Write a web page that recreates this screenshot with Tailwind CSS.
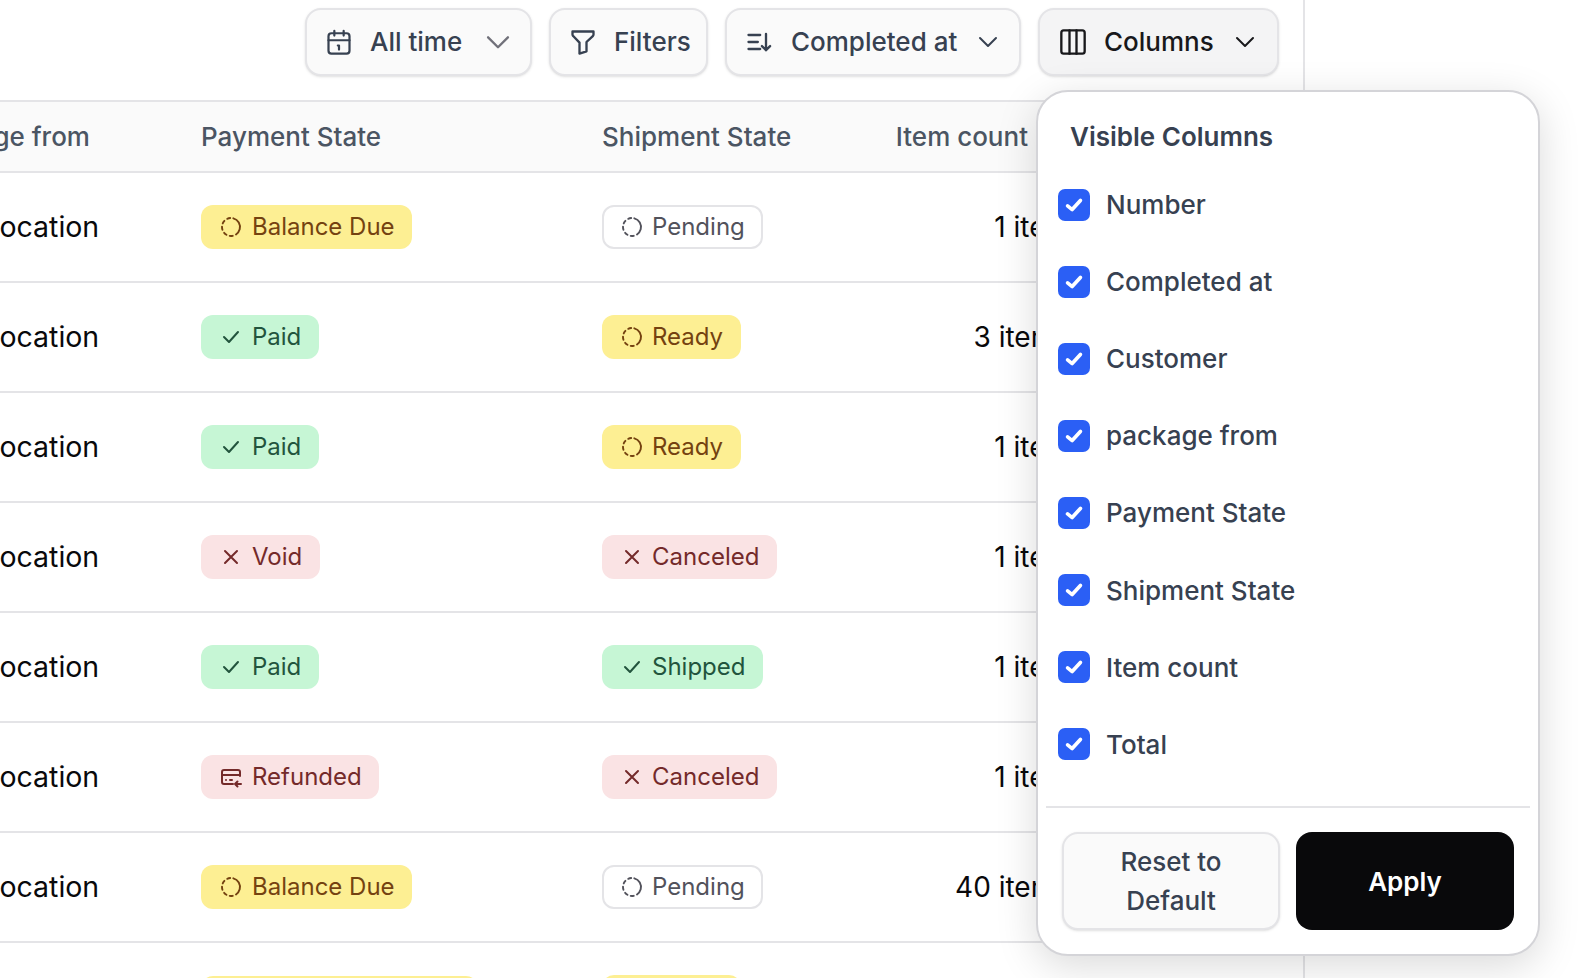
<!DOCTYPE html>
<html lang="en">
  <head>
    <meta charset="UTF-8" />
    <title>Orders</title>
    <script src="https://cdn.jsdelivr.net/npm/@tailwindcss/browser@4"></script>
  </head>
  <body class="bg-white font-['Inter',sans-serif] text-[#09090b]">
    <div class="relative w-[1592px] h-[978px] overflow-hidden">
      <div class="w-[1305px] h-full border-r-2 border-[#e4e4e7] overflow-hidden">
        <!-- toolbar -->
        <div class="h-[100px] flex justify-end items-start gap-[17px] pt-[8px] pr-[24px] text-[26px] leading-[36px] font-medium text-[#374151]">
          <button class="h-[68px] w-[227px] pl-[18px] pr-[18px] flex items-center border-2 border-[#e4e4e7] rounded-[16px] bg-[#fafafa] shadow-sm">
            <svg class="w-[28px] h-[28px] mr-[17px]" viewBox="0 0 24 24" fill="none" stroke="currentColor" stroke-width="1.9" stroke-linecap="round" stroke-linejoin="round"><rect x="3" y="4.5" width="18" height="17.5" rx="2.5"/><path d="M16 2.5v4M8 2.5v4M3 10.5h18M11 15h1v3.5"/></svg>
            <span>All time</span>
            <svg class="w-[28px] h-[28px] ml-auto text-[#71717a]" viewBox="0 0 24 24" fill="none" stroke="currentColor" stroke-width="2" stroke-linecap="round" stroke-linejoin="round"><path d="M3.5 8l8.5 8.5L20.5 8"/></svg>
          </button>
          <button class="h-[68px] w-[159px] pl-[18px] flex items-center border-2 border-[#e4e4e7] rounded-[16px] bg-[#fafafa] shadow-sm">
            <svg class="w-[28px] h-[28px] mr-[17px]" viewBox="0 0 24 24" fill="none" stroke="currentColor" stroke-width="2" stroke-linecap="round" stroke-linejoin="round"><path d="M3 3h18v2.5a2 2 0 0 1-.6 1.4L15 12v8l-6 2V12.5L3.6 6.9A2 2 0 0 1 3 5.5z"/></svg>
            <span>Filters</span>
          </button>
          <button class="h-[68px] w-[296px] pl-[18px] pr-[19px] flex items-center border-2 border-[#e4e4e7] rounded-[16px] bg-[#fafafa] shadow-sm">
            <svg class="w-[28px] h-[28px] mr-[18px]" viewBox="0 0 24 24" fill="none" stroke="currentColor" stroke-width="2" stroke-linecap="round" stroke-linejoin="round"><path d="M3 6h10M3 12h8M3 18h10M18 5v14M14.5 15.5L18 19l3.5-3.5"/></svg>
            <span>Completed at</span>
            <svg class="w-[24px] h-[24px] ml-auto" viewBox="0 0 24 24" fill="none" stroke="currentColor" stroke-width="2" stroke-linecap="round" stroke-linejoin="round"><path d="M4 8l8 8 8-8"/></svg>
          </button>
          <button class="h-[68px] w-[241px] pl-[19px] pr-[20px] flex items-center border-2 border-[#e4e4e7] rounded-[16px] bg-[#f4f4f5] shadow-sm text-[#18181b]">
            <svg class="w-[28px] h-[28px] mr-[17px]" viewBox="0 0 24 24" fill="none" stroke="currentColor" stroke-width="2" stroke-linecap="round" stroke-linejoin="round"><rect x="2" y="2" width="20" height="20" rx="2"/><path d="M9 2v20M15 2v20"/></svg>
            <span>Columns</span>
            <svg class="w-[24px] h-[24px] ml-auto" viewBox="0 0 24 24" fill="none" stroke="currentColor" stroke-width="2" stroke-linecap="round" stroke-linejoin="round"><path d="M4 8l8 8 8-8"/></svg>
          </button>
        </div>
        <!-- table head -->
        <div class="-ml-[82px] w-[1500px] h-[73px] flex items-center bg-[#fafafa] border-y-2 border-[#e4e4e7] text-[26px] font-medium text-[#4b5563]">
          <div class="w-[283px]">package from</div>
          <div class="w-[401px]">Payment State</div>
          <div class="w-[278px]">Shipment State</div>
          <div class="w-[194px] text-right pr-[46px]">Item count</div>
        </div>
        <!-- rows -->
        <div class="-ml-[81px] w-[1500px] text-[28px]">
          <div class="h-[110px] flex items-center border-b-2 border-[#e4e4e7]">
            <div class="w-[282px] text-[28.5px]">Main location</div>
            <div class="w-[401px]"><span class="inline-flex h-[44px] items-center gap-[9px] pl-[18px] pr-[17px] rounded-[12px] bg-[#fdef93] text-[#744210] text-[24px]"><svg class="w-[24px] h-[24px]" viewBox="0 0 24 24" fill="none" stroke="currentColor" stroke-width="1.9" stroke-linecap="round"><circle cx="12" cy="12" r="9" stroke-dasharray="20.5 3.5 3 3.5 3 3.5 3 3.5 3 3.5 3 3.5" transform="rotate(-75 12 12)"/></svg>Balance Due</span></div>
            <div class="w-[278px]"><span class="inline-flex h-[44px] items-center gap-[8px] pl-[16px] pr-[16px] rounded-[12px] bg-white border-2 border-[#e4e4e7] text-[#52525b] text-[24px]"><svg class="w-[24px] h-[24px]" viewBox="0 0 24 24" fill="none" stroke="currentColor" stroke-width="1.9" stroke-linecap="round"><circle cx="12" cy="12" r="9" stroke-dasharray="20.5 3.5 3 3.5 3 3.5 3 3.5 3 3.5 3 3.5" transform="rotate(-75 12 12)"/></svg>Pending</span></div>
            <div class="w-[190px] text-right">1 item</div>
          </div>
          <div class="h-[110px] flex items-center border-b-2 border-[#e4e4e7]">
            <div class="w-[282px] text-[28.5px]">Main location</div>
            <div class="w-[401px]"><span class="inline-flex h-[44px] items-center gap-[9px] pl-[18px] pr-[18px] rounded-[12px] bg-[#c6f6d5] text-[#22543d] text-[24px]"><svg class="w-[24px] h-[24px]" viewBox="0 0 24 24" fill="none" stroke="currentColor" stroke-width="2" stroke-linecap="round" stroke-linejoin="round"><path d="M5 12l5 5 9-10"/></svg>Paid</span></div>
            <div class="w-[278px]"><span class="inline-flex h-[44px] items-center gap-[8px] pl-[18px] pr-[18px] rounded-[12px] bg-[#fdef93] text-[#744210] text-[24px]"><svg class="w-[24px] h-[24px]" viewBox="0 0 24 24" fill="none" stroke="currentColor" stroke-width="1.9" stroke-linecap="round"><circle cx="12" cy="12" r="9" stroke-dasharray="20.5 3.5 3 3.5 3 3.5 3 3.5 3 3.5 3 3.5" transform="rotate(-75 12 12)"/></svg>Ready</span></div>
            <div class="w-[190px] text-right">3 items</div>
          </div>
          <div class="h-[110px] flex items-center border-b-2 border-[#e4e4e7]">
            <div class="w-[282px] text-[28.5px]">Main location</div>
            <div class="w-[401px]"><span class="inline-flex h-[44px] items-center gap-[9px] pl-[18px] pr-[18px] rounded-[12px] bg-[#c6f6d5] text-[#22543d] text-[24px]"><svg class="w-[24px] h-[24px]" viewBox="0 0 24 24" fill="none" stroke="currentColor" stroke-width="2" stroke-linecap="round" stroke-linejoin="round"><path d="M5 12l5 5 9-10"/></svg>Paid</span></div>
            <div class="w-[278px]"><span class="inline-flex h-[44px] items-center gap-[8px] pl-[18px] pr-[18px] rounded-[12px] bg-[#fdef93] text-[#744210] text-[24px]"><svg class="w-[24px] h-[24px]" viewBox="0 0 24 24" fill="none" stroke="currentColor" stroke-width="1.9" stroke-linecap="round"><circle cx="12" cy="12" r="9" stroke-dasharray="20.5 3.5 3 3.5 3 3.5 3 3.5 3 3.5 3 3.5" transform="rotate(-75 12 12)"/></svg>Ready</span></div>
            <div class="w-[190px] text-right">1 item</div>
          </div>
          <div class="h-[110px] flex items-center border-b-2 border-[#e4e4e7]">
            <div class="w-[282px] text-[28.5px]">Main location</div>
            <div class="w-[401px]"><span class="inline-flex h-[44px] items-center gap-[9px] pl-[18px] pr-[18px] rounded-[12px] bg-[#fae3e4] text-[#742a2a] text-[24px]"><svg class="w-[24px] h-[24px]" viewBox="0 0 24 24" fill="none" stroke="currentColor" stroke-width="2" stroke-linecap="round"><path d="M6 6l12 12M18 6L6 18"/></svg>Void</span></div>
            <div class="w-[278px]"><span class="inline-flex h-[44px] items-center gap-[8px] pl-[18px] pr-[18px] rounded-[12px] bg-[#fae3e4] text-[#742a2a] text-[24px]"><svg class="w-[24px] h-[24px]" viewBox="0 0 24 24" fill="none" stroke="currentColor" stroke-width="2" stroke-linecap="round"><path d="M6 6l12 12M18 6L6 18"/></svg>Canceled</span></div>
            <div class="w-[190px] text-right">1 item</div>
          </div>
          <div class="h-[110px] flex items-center border-b-2 border-[#e4e4e7]">
            <div class="w-[282px] text-[28.5px]">Main location</div>
            <div class="w-[401px]"><span class="inline-flex h-[44px] items-center gap-[9px] pl-[18px] pr-[18px] rounded-[12px] bg-[#c6f6d5] text-[#22543d] text-[24px]"><svg class="w-[24px] h-[24px]" viewBox="0 0 24 24" fill="none" stroke="currentColor" stroke-width="2" stroke-linecap="round" stroke-linejoin="round"><path d="M5 12l5 5 9-10"/></svg>Paid</span></div>
            <div class="w-[278px]"><span class="inline-flex h-[44px] items-center gap-[8px] pl-[18px] pr-[18px] rounded-[12px] bg-[#c6f6d5] text-[#22543d] text-[24px]"><svg class="w-[24px] h-[24px]" viewBox="0 0 24 24" fill="none" stroke="currentColor" stroke-width="2" stroke-linecap="round" stroke-linejoin="round"><path d="M5 12l5 5 9-10"/></svg>Shipped</span></div>
            <div class="w-[190px] text-right">1 item</div>
          </div>
          <div class="h-[110px] flex items-center border-b-2 border-[#e4e4e7]">
            <div class="w-[282px] text-[28.5px]">Main location</div>
            <div class="w-[401px]"><span class="inline-flex h-[44px] items-center gap-[9px] pl-[18px] pr-[17px] rounded-[12px] bg-[#fae3e4] text-[#742a2a] text-[24px]"><svg class="w-[24px] h-[24px]" viewBox="0 0 24 24" fill="none" stroke="currentColor" stroke-width="2" stroke-linecap="round" stroke-linejoin="round"><path d="M21 11V7a2 2 0 0 0-2-2H5a2 2 0 0 0-2 2v10a2 2 0 0 0 2 2h9M3 10h18M7 15h.01M11 15h2M22 19h-6M18.5 16.5L16 19l2.5 2.5"/></svg>Refunded</span></div>
            <div class="w-[278px]"><span class="inline-flex h-[44px] items-center gap-[8px] pl-[18px] pr-[18px] rounded-[12px] bg-[#fae3e4] text-[#742a2a] text-[24px]"><svg class="w-[24px] h-[24px]" viewBox="0 0 24 24" fill="none" stroke="currentColor" stroke-width="2" stroke-linecap="round"><path d="M6 6l12 12M18 6L6 18"/></svg>Canceled</span></div>
            <div class="w-[190px] text-right">1 item</div>
          </div>
          <div class="h-[110px] flex items-center border-b-2 border-[#e4e4e7]">
            <div class="w-[282px] text-[28.5px]">Main location</div>
            <div class="w-[401px]"><span class="inline-flex h-[44px] items-center gap-[9px] pl-[18px] pr-[17px] rounded-[12px] bg-[#fdef93] text-[#744210] text-[24px]"><svg class="w-[24px] h-[24px]" viewBox="0 0 24 24" fill="none" stroke="currentColor" stroke-width="1.9" stroke-linecap="round"><circle cx="12" cy="12" r="9" stroke-dasharray="20.5 3.5 3 3.5 3 3.5 3 3.5 3 3.5 3 3.5" transform="rotate(-75 12 12)"/></svg>Balance Due</span></div>
            <div class="w-[278px]"><span class="inline-flex h-[44px] items-center gap-[8px] pl-[16px] pr-[16px] rounded-[12px] bg-white border-2 border-[#e4e4e7] text-[#52525b] text-[24px]"><svg class="w-[24px] h-[24px]" viewBox="0 0 24 24" fill="none" stroke="currentColor" stroke-width="1.9" stroke-linecap="round"><circle cx="12" cy="12" r="9" stroke-dasharray="20.5 3.5 3 3.5 3 3.5 3 3.5 3 3.5 3 3.5" transform="rotate(-75 12 12)"/></svg>Pending</span></div>
            <div class="w-[190px] text-right">40 items</div>
          </div>
          <div class="h-[110px] flex items-center border-b-2 border-[#e4e4e7]">
            <div class="w-[282px] text-[28.5px]">Main location</div>
            <div class="w-[401px]"><span class="inline-flex w-[277px] h-[44px] items-center gap-[9px] pl-[18px] pr-[18px] rounded-[12px] bg-[#fdef93] text-[#744210] text-[24px]">Partially Paid</span></div>
            <div class="w-[278px]"><span class="inline-flex h-[44px] items-center gap-[8px] pl-[18px] pr-[18px] rounded-[12px] bg-[#fdef93] text-[#744210] text-[24px]"><svg class="w-[24px] h-[24px]" viewBox="0 0 24 24" fill="none" stroke="currentColor" stroke-width="1.9" stroke-linecap="round"><circle cx="12" cy="12" r="9" stroke-dasharray="20.5 3.5 3 3.5 3 3.5 3 3.5 3 3.5 3 3.5" transform="rotate(-75 12 12)"/></svg>Ready</span></div>
            <div class="w-[190px] text-right">1 item</div>
          </div>
        </div>
      </div>
      <!-- columns popover -->
      <div class="absolute left-[1036px] top-[90px] w-[504px] h-[866px] bg-white border-2 border-[#d4d4d8] rounded-[32px] shadow-[0_10px_40px_rgba(0,0,0,0.15)] flex flex-col text-[26px] font-medium text-[#374151]">
        <div class="pl-[32px] pt-[25px] h-[74px] font-semibold">Visible Columns</div>
        <div class="flex flex-col pl-[20px] h-[623px]">
          <label class="h-[77.1px] flex items-center gap-[16px]"><span class="w-[32px] h-[32px] rounded-[7px] bg-[#2b5ff5] flex items-center justify-center"><svg class="w-[22px] h-[22px]" viewBox="0 0 24 24" fill="none" stroke="white" stroke-width="4" stroke-linecap="round" stroke-linejoin="round"><path d="M5 13l5 4 9-10"/></svg></span>Number</label>
          <label class="h-[77.1px] flex items-center gap-[16px]"><span class="w-[32px] h-[32px] rounded-[7px] bg-[#2b5ff5] flex items-center justify-center"><svg class="w-[22px] h-[22px]" viewBox="0 0 24 24" fill="none" stroke="white" stroke-width="4" stroke-linecap="round" stroke-linejoin="round"><path d="M5 13l5 4 9-10"/></svg></span>Completed at</label>
          <label class="h-[77.1px] flex items-center gap-[16px]"><span class="w-[32px] h-[32px] rounded-[7px] bg-[#2b5ff5] flex items-center justify-center"><svg class="w-[22px] h-[22px]" viewBox="0 0 24 24" fill="none" stroke="white" stroke-width="4" stroke-linecap="round" stroke-linejoin="round"><path d="M5 13l5 4 9-10"/></svg></span>Customer</label>
          <label class="h-[77.1px] flex items-center gap-[16px]"><span class="w-[32px] h-[32px] rounded-[7px] bg-[#2b5ff5] flex items-center justify-center"><svg class="w-[22px] h-[22px]" viewBox="0 0 24 24" fill="none" stroke="white" stroke-width="4" stroke-linecap="round" stroke-linejoin="round"><path d="M5 13l5 4 9-10"/></svg></span>package from</label>
          <label class="h-[77.1px] flex items-center gap-[16px]"><span class="w-[32px] h-[32px] rounded-[7px] bg-[#2b5ff5] flex items-center justify-center"><svg class="w-[22px] h-[22px]" viewBox="0 0 24 24" fill="none" stroke="white" stroke-width="4" stroke-linecap="round" stroke-linejoin="round"><path d="M5 13l5 4 9-10"/></svg></span>Payment State</label>
          <label class="h-[77.1px] flex items-center gap-[16px]"><span class="w-[32px] h-[32px] rounded-[7px] bg-[#2b5ff5] flex items-center justify-center"><svg class="w-[22px] h-[22px]" viewBox="0 0 24 24" fill="none" stroke="white" stroke-width="4" stroke-linecap="round" stroke-linejoin="round"><path d="M5 13l5 4 9-10"/></svg></span>Shipment State</label>
          <label class="h-[77.1px] flex items-center gap-[16px]"><span class="w-[32px] h-[32px] rounded-[7px] bg-[#2b5ff5] flex items-center justify-center"><svg class="w-[22px] h-[22px]" viewBox="0 0 24 24" fill="none" stroke="white" stroke-width="4" stroke-linecap="round" stroke-linejoin="round"><path d="M5 13l5 4 9-10"/></svg></span>Item count</label>
          <label class="h-[77.1px] flex items-center gap-[16px]"><span class="w-[32px] h-[32px] rounded-[7px] bg-[#2b5ff5] flex items-center justify-center"><svg class="w-[22px] h-[22px]" viewBox="0 0 24 24" fill="none" stroke="white" stroke-width="4" stroke-linecap="round" stroke-linejoin="round"><path d="M5 13l5 4 9-10"/></svg></span>Total</label>
        </div>
        <div class="ml-[8px] mr-[8px] mt-[17px] border-t-2 border-[#e4e4e7]"></div>
        <div class="flex gap-[16px] pl-[24px] pt-[24px]">
          <button class="w-[218px] h-[98px] px-[30px] border-2 border-[#e4e4e7] rounded-[16px] bg-[#fafafa] shadow-sm leading-[39px]">Reset to Default</button>
          <button class="w-[218px] h-[98px] rounded-[16px] bg-[#09090b] text-white font-semibold">Apply</button>
        </div>
      </div>
    </div>
  </body>
</html>
